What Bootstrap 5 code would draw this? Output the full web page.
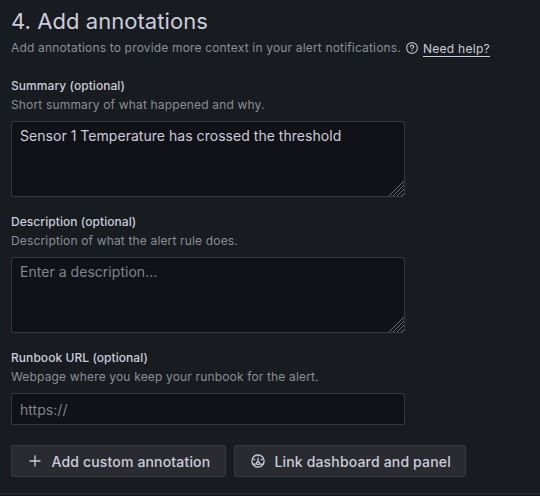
<!DOCTYPE html>
<html lang="en" data-bs-theme="dark">
<head>
<meta charset="utf-8">
<meta name="viewport" content="width=device-width, initial-scale=1">
<title>Add annotations</title>
<link href="https://cdn.jsdelivr.net/npm/bootstrap@5.3.0/dist/css/bootstrap.min.css" rel="stylesheet">
<style>
body { background: #181b1f; color: #ccccdc; font-family: Inter, "Liberation Sans", sans-serif; font-size: 14px; line-height: 22px; overflow: hidden; }
.step { height: 494px; padding: 8px 11px 0; border-bottom: 1px solid #2d2f34; }
.step-title { font-size: 22px; line-height: 26px; font-weight: 400; letter-spacing: .06px; color: #ccccdc; }
.step-help { font-size: 12px; line-height: 18px; letter-spacing: .17px; height: 18px; margin-top: 5px; }
.muted { color: #8d8e99; }
.help-link { color: #ccccdc; border-bottom: 1px solid #ccccdc; line-height: 14px; margin-top: 2px; letter-spacing: .28px; }
.fields { width: 394px; gap: 17px; margin-top: 21px; }
.field-label { font-size: 12px; line-height: 15px; font-weight: 500; letter-spacing: .06px; margin-bottom: 4px; display: block; }
.field-note { font-size: 12px; line-height: 15px; letter-spacing: .16px; margin-bottom: 9px; }
.form-control.entry { background: #111217; border: 1px solid #36373d; border-radius: 2px; color: #ccccdc; font-size: 14px; line-height: 20px; letter-spacing: .035px; padding: 4px 8px; display: block; resize: none; overflow: hidden; }
.form-control.entry::placeholder { color: #82838d; opacity: 1; }
textarea.form-control.entry { height: 76px; min-height: 76px; }
input.form-control.entry { height: 32px; min-height: 32px; }
.grip { right: 1px; bottom: 1px; }
.actions { margin-top: 20px; }
.btn.action { height: 32px; background: #2a2b30; border: 1px solid #37383e; border-radius: 2px; color: #ccccdc; font-size: 14px; line-height: 30px; font-weight: 500; letter-spacing: .17px; padding: 0 0 0 15px; gap: 8.4px; }
.action-add { width: 215px; }
.action-link { width: 232px; }
.action span { position: relative; top: 1px; }
</style>
<script src="https://cdn.jsdelivr.net/npm/bootstrap@5.3.0/dist/js/bootstrap.bundle.min.js"></script>
</head>
<body>
<section class="step">
  <h3 class="step-title mb-0">4. Add annotations</h3>
  <div class="step-help d-flex align-items-center">
    <span class="muted text-nowrap">Add annotations to provide more context in your alert notifications.</span>
    <svg class="flex-shrink-0 ms-1" width="14" height="14" viewBox="0 0 14 14" fill="none" stroke="#b9bac8" stroke-width="1.2" stroke-linecap="round"><circle cx="7" cy="7" r="5.4"/><path d="M5.4 5.7a1.6 1.6 0 1 1 2.3 1.4q-.7.4-.7.9M7 9.7v.1"/></svg>
    <a class="help-link text-decoration-none text-nowrap ms-1" href="#">Need help?</a>
  </div>

  <div class="fields d-flex flex-column">
    <div>
      <label class="field-label" for="summary">Summary (optional)</label>
      <div class="field-note muted">Short summary of what happened and why.</div>
      <div class="position-relative">
        <textarea class="form-control entry" id="summary">Sensor 1 Temperature has crossed the threshold</textarea>
        <svg class="grip position-absolute" width="15" height="15" viewBox="0 0 15 15" stroke="#777980" stroke-width=".9"><path d="M0 15 15 0M4 15 15 4M8 15l7-7M12 15l3-3"/></svg>
      </div>
    </div>
    <div>
      <label class="field-label" for="description">Description (optional)</label>
      <div class="field-note muted">Description of what the alert rule does.</div>
      <div class="position-relative">
        <textarea class="form-control entry" id="description" placeholder="Enter a description..."></textarea>
        <svg class="grip position-absolute" width="15" height="15" viewBox="0 0 15 15" stroke="#777980" stroke-width=".9"><path d="M0 15 15 0M4 15 15 4M8 15l7-7M12 15l3-3"/></svg>
      </div>
    </div>
    <div>
      <label class="field-label" for="runbook">Runbook URL (optional)</label>
      <div class="field-note muted">Webpage where you keep your runbook for the alert.</div>
      <input class="form-control entry" id="runbook" type="text" placeholder="https://">
    </div>
  </div>

  <div class="actions d-flex gap-2">
    <button class="btn action action-add d-flex align-items-center text-nowrap" type="button">
      <svg width="16" height="16" viewBox="0 0 16 16" fill="none" stroke="#ccccdc" stroke-width="1.3" stroke-linecap="round"><path d="M8 3v10M3 8h10"/></svg>
      <span>Add custom annotation</span>
    </button>
    <button class="btn action action-link d-flex align-items-center text-nowrap" type="button">
      <svg width="16" height="16" viewBox="0 0 16 16" fill="none" stroke="#ccccdc" stroke-width="1.3" stroke-linecap="round"><circle cx="8" cy="8" r="6.1"/><path d="M8 5.3v3.4M8 2.3v.8M3.9 6.3l.8.4M12.1 6.3l-.8.4M3.2 11.2h2.7M10.1 11.2h2.7"/><circle cx="8" cy="10.1" r="1.5"/></svg>
      <span>Link dashboard and panel</span>
    </button>
  </div>
</section>
</body>
</html>
